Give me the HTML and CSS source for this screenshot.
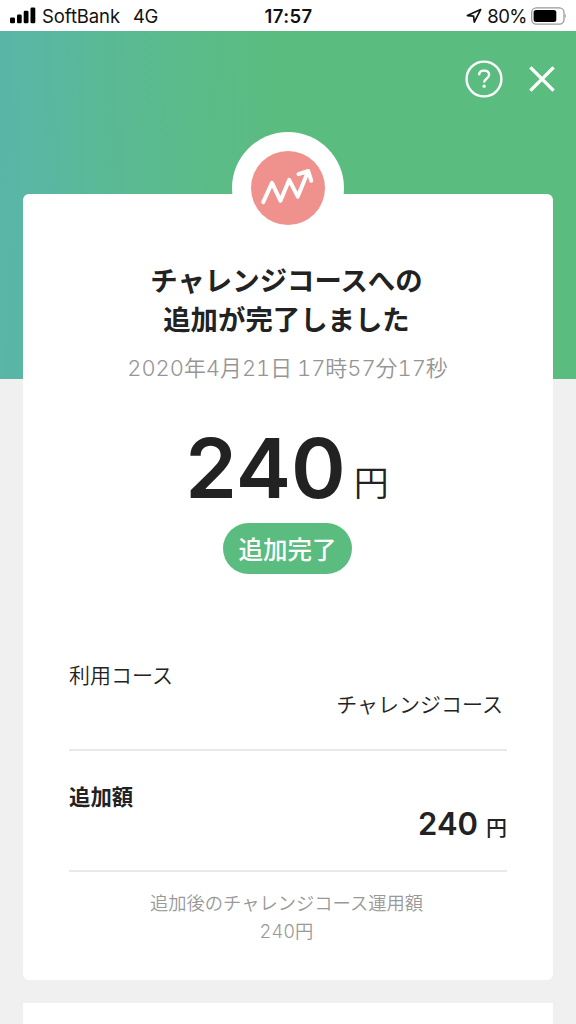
FILE: index.html
```html
<!DOCTYPE html>
<html lang="ja">
<head>
<meta charset="utf-8">
<title>追加完了</title>
<link rel="stylesheet" href="styles.css">
</head>
<body>
<header class="status">
  <div class="status-left">
    <svg class="signal" width="26" height="17" viewBox="0 0 26 17"><rect x="0" y="10.5" width="5" height="5.7" rx="1.3"/><rect x="7" y="7.5" width="4.7" height="8.7" rx="1.3"/><rect x="13.7" y="3.7" width="4.8" height="12.5" rx="1.3"/><rect x="20.5" y="0.5" width="4.8" height="15.7" rx="1.3"/></svg>
    <span class="carrier">SoftBank</span><span class="network">4G</span>
  </div>
  <div class="clock">17:57</div>
  <div class="status-right">
    <svg width="16" height="16" viewBox="0 0 16 16"><path d="M14.6 1.6 1.4 7.6l6.2.6.7 6z" fill="none" stroke="#111" stroke-width="1.7" stroke-linejoin="round"/></svg>
    <span class="percent">80%</span>
    <svg width="36" height="18" viewBox="0 0 36 18"><rect x=".7" y=".9" width="32.3" height="16.2" rx="4.7" fill="none" stroke="#999" stroke-width="1.3"/><rect x="2.6" y="3" width="22.7" height="12" rx="2.5"/><path d="M34.3 6.5q1.7 2.5 0 5z" fill="#888"/></svg>
  </div>
</header>
<main class="page">
  <nav class="actions">
    <svg width="38" height="38" viewBox="0 0 38 38" fill="none" stroke="#fff"><circle cx="19" cy="19" r="17.4" stroke-width="2.4"/><path d="M14.1 15.2c0-3 2-4.6 4.9-4.6 3 0 5.1 1.6 5.1 4.2 0 3.9-5 3.9-5 7.6" stroke-width="2.3"/><circle cx="19.1" cy="26.2" r="1.6" fill="#fff" stroke="none"/></svg>
    <svg class="close" width="26" height="26" viewBox="0 0 26 26"><path d="M1.4 1.4l23.2 23.2M24.6 1.4 1.4 24.6" stroke="#fff" stroke-width="3.4"/></svg>
  </nav>
  <section class="card">
    <div class="badge">
      <svg width="74" height="74" viewBox="0 0 74 74"><circle cx="37" cy="37" r="37" fill="#ef928e"/><path d="M12.2 51.2 21 31.8l8.5 18L38.2 28.8l8.6 16.8L57 20.4M47.5 23.2 57.3 20l3 9.8" fill="none" stroke="#fff" stroke-width="4" stroke-linecap="round" stroke-linejoin="round"/></svg>
    </div>
    <h1 class="title">チャレンジコースへの<br>追加が完了しました</h1>
    <p class="date"><span class="num">2020</span>年<span class="num">4</span>月<span class="num">21</span>日 <span class="num">17</span>時<span class="num">57</span>分<span class="num">17</span>秒</p>
    <p class="amount"><span class="amount-num">240</span><span class="amount-unit">円</span></p>
    <div class="pill">追加完了</div>
    <div class="row">
      <div class="label">利用コース</div>
      <div class="value course">チャレンジコース</div>
    </div>
    <div class="row row-bold">
      <div class="label">追加額</div>
      <div class="value"><span class="value-num">240</span><span class="value-unit">円</span></div>
    </div>
    <p class="note">追加後のチャレンジコース運用額<br><span class="num">240</span>円</p>
  </section>
  <section class="card-next"></section>
</main>
</body>
</html>
```
FILE: styles.css
```css
* { box-sizing: border-box; }
body {
  margin: 0;
  width: 576px;
  height: 1024px;
  overflow: hidden;
  background: #f0f0f0;
  color: #222;
  font-family: "Noto Sans CJK JP", sans-serif;
}
svg { display: block; flex: none; }
h1, p { margin: 0; }

.status {
  display: grid;
  grid-template-columns: 1fr auto 1fr;
  align-items: center;
  height: 31px;
  padding: 0 9px 0 10px;
  background: #fff;
  color: #111;
  font: 18.5px/30px Inter, sans-serif;
}
.status-left, .status-right { display: flex; align-items: center; }
.status-right { justify-content: flex-end; }
.signal { margin-top: -1px; }
.carrier { margin-left: 6px; letter-spacing: -.1px; }
.network { margin-left: 13px; letter-spacing: -.4px; }
.clock { font-weight: 600; letter-spacing: .4px; }
.percent { margin: 0 4px 0 5px; letter-spacing: -.5px; }

.page {
  height: 993px;
  padding: 0 23px;
  background: linear-gradient(89deg, #59b6a8 0%, #59b7a2 8%, #5ab996 18%, #5bbb8a 33%, #5bbc80 49%) 0 0 / 100% 348px no-repeat;
}
.actions {
  display: flex;
  align-items: center;
  justify-content: flex-end;
  gap: 26px;
  height: 162.5px;
  margin-right: -2px;
  padding-bottom: 66px;
}
.card {
  display: flex;
  flex-direction: column;
  align-items: center;
  height: 786px;
  padding: 0 46px;
  border-radius: 6px;
  background: #fff;
}
.badge {
  display: flex;
  align-items: center;
  justify-content: center;
  width: 112px;
  height: 112px;
  margin-top: -61.5px;
  border-radius: 50%;
  background: #fff;
  flex: none;
}
.title {
  margin: 16px 3px 0 0;
  font-size: 27.4px;
  line-height: 39px;
  font-weight: 700;
  text-align: center;
  white-space: nowrap;
}
.date {
  margin-top: 14px;
  margin-right: 1px;
  color: #959595;
  font-size: 21.9px;
  line-height: 30px;
  font-weight: 350;
  white-space: nowrap;
}
.num { font-family: Inter, sans-serif; font-weight: 300; font-variant-numeric: tabular-nums; }
.amount {
  display: flex;
  align-items: baseline;
  margin-top: 33px;
  margin-right: 2px;
  height: 104px;
  line-height: 104px;
}
.amount-num { font: 600 83px/104px Inter, sans-serif; }
.amount-unit { margin-left: 8px; font-size: 35px; font-weight: 350; transform: translateY(-2px); }
.pill {
  height: 51px;
  margin-top: 3px;
  margin-right: 1px;
  padding: 0 15.5px;
  border-radius: 26px;
  background: #5bbc80;
  color: #fff;
  font-size: 24.5px;
  line-height: 51px;
  font-weight: 500;
}
.row {
  width: 438px;
  height: 121.5px;
  padding-top: 31px;
  border-bottom: 2px solid #e9e9e9;
  font-size: 21px;
  line-height: 29px;
}
.pill + .row { margin-top: 55px; font-weight: 350; }
.label { height: 29px; }
.value { text-align: right; }
.course { padding-right: 4px; }
.row-bold { font-weight: 700; padding-top: 30px; }
.row-bold .label { font-size: 21.4px; }
.row-bold .value { display: flex; justify-content: flex-end; align-items: baseline; gap: 8px; margin-top: -1px; }
.value-num { font: 600 31px/30px Inter, sans-serif; }
.value-unit { font-weight: 500; }
.note {
  margin: 16px 3px 0 0;
  color: #999;
  font-size: 18.3px;
  line-height: 28px;
  font-weight: 350;
  text-align: center;
  white-space: nowrap;
}
.card-next { height: 22px; margin-top: 23px; background: #fff; }
```
